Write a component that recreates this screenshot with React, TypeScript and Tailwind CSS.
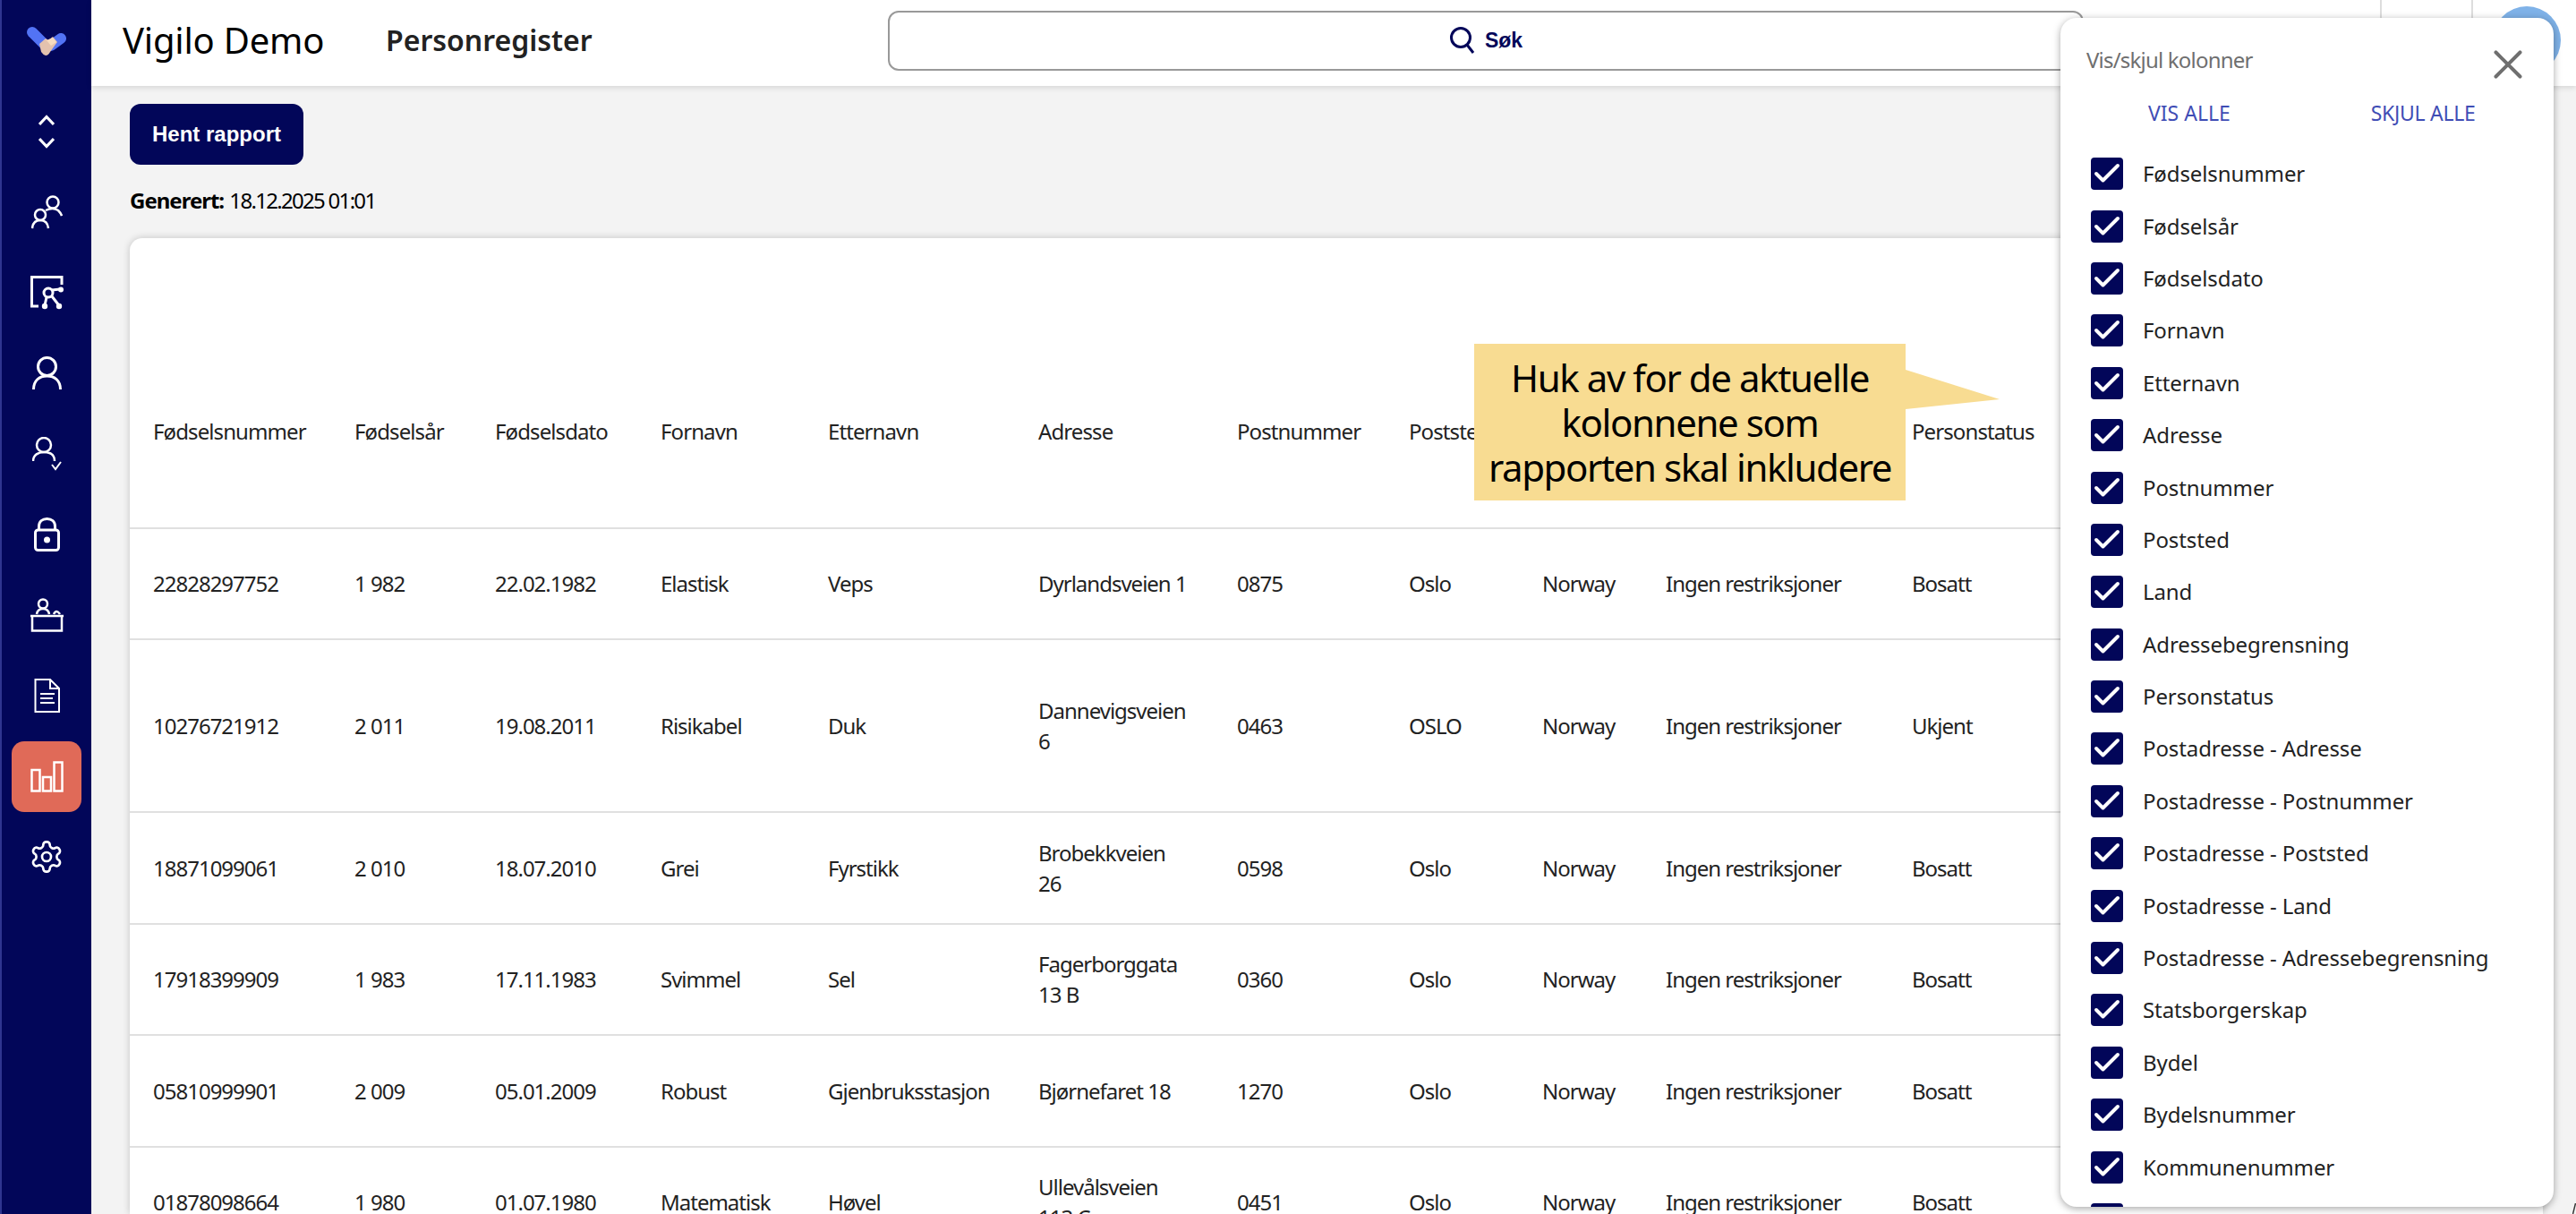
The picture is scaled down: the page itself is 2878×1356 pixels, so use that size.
import React from 'react';
import { Check, X } from 'lucide-react';

const columns = ['Fødselsnummer', 'Fødselsår', 'Fødselsdato', 'Fornavn', 'Etternavn', 'Adresse', 'Postnummer', 'Poststed', 'Land', 'Adressebegrensning', 'Personstatus'];

const rows = [
  { h: 'h-[124px]', cells: ['22828297752', '1 982', '22.02.1982', 'Elastisk', 'Veps', 'Dyrlandsveien 1', '0875', 'Oslo', 'Norway', 'Ingen restriksjoner', 'Bosatt'] },
  { h: 'h-[193px]', cells: ['10276721912', '2 011', '19.08.2011', 'Risikabel', 'Duk', 'Dannevigsveien\n6', '0463', 'OSLO', 'Norway', 'Ingen restriksjoner', 'Ukjent'] },
  { h: 'h-[125px]', cells: ['18871099061', '2 010', '18.07.2010', 'Grei', 'Fyrstikk', 'Brobekkveien\n26', '0598', 'Oslo', 'Norway', 'Ingen restriksjoner', 'Bosatt'] },
  { h: 'h-[124px]', cells: ['17918399909', '1 983', '17.11.1983', 'Svimmel', 'Sel', 'Fagerborggata\n13 B', '0360', 'Oslo', 'Norway', 'Ingen restriksjoner', 'Bosatt'] },
  { h: 'h-[125px]', cells: ['05810999901', '2 009', '05.01.2009', 'Robust', 'Gjenbruksstasjon', 'Bjørnefaret 18', '1270', 'Oslo', 'Norway', 'Ingen restriksjoner', 'Bosatt'] },
  { h: 'h-[124px]', cells: ['01878098664', '1 980', '01.07.1980', 'Matematisk', 'Høvel', 'Ullevålsveien\n113 C', '0451', 'Oslo', 'Norway', 'Ingen restriksjoner', 'Bosatt'] },
];

const widths = ['w-[251px]', 'w-[157px]', 'w-[185px]', 'w-[187px]', 'w-[235px]', 'w-[222px]', 'w-[192px]', 'w-[149px]', 'w-[138px]', 'w-[275px]', 'w-[160px]'];

const options = ['Fødselsnummer', 'Fødselsår', 'Fødselsdato', 'Fornavn', 'Etternavn', 'Adresse', 'Postnummer', 'Poststed', 'Land', 'Adressebegrensning', 'Personstatus', 'Postadresse - Adresse', 'Postadresse - Postnummer', 'Postadresse - Poststed', 'Postadresse - Land', 'Postadresse - Adressebegrensning', 'Statsborgerskap', 'Bydel', 'Bydelsnummer', 'Kommunenummer', 'Kommune'];

const Logo = () => (
  <svg width="44" height="32" viewBox="0 0 44 32">
    <path d="M6 6 L21 21" stroke="#5273f5" strokeWidth="12" strokeLinecap="round" />
    <path d="M38 13 L27 21" stroke="#5273f5" strokeWidth="12" strokeLinecap="round" />
    <path d="M14 19 L21 13 L24 15 L29 11 L34 17 L26 28 Q24 32 21 32 Q18 31 16 28 Z" fill="#e3c2ae" />
    <path d="M22 15 L29 12 L33 17 L27 21 Z" fill="#f6dcc0" />
  </svg>
);

const navIcons = [
  // opp/ned
  <svg key="a" width="18" height="38" viewBox="0 0 18 38" fill="none" stroke="white" strokeWidth="3.2"><path d="M1 11 L9 2.5 L17 11 M1 27 L9 35.5 L17 27" /></svg>,
  // brukere
  <svg key="b" width="35" height="38" viewBox="0 0 35 38" fill="none" stroke="white" strokeWidth="2.5"><circle cx="24" cy="8" r="6.5" /><path d="M16 17 Q24 13 30 17 Q33 20 34 23" /><circle cx="10" cy="22" r="6" /><path d="M1 37 Q2 28 10 28 Q18 28 19 37" /></svg>,
  // tavle
  <svg key="c" width="37" height="38" viewBox="0 0 37 38" fill="none" stroke="white" strokeWidth="3"><path d="M35 10 V1.5 H1.5 V34 H9" /><circle cx="20" cy="19" r="5" /><path d="M24 16 L33 15 M24 23 L31 32 M18 24 L16 33" /><circle cx="34" cy="15.5" r="3" fill="white" stroke="none" /><circle cx="32" cy="34" r="3.2" fill="white" stroke="none" /><circle cx="16" cy="34" r="3.2" fill="white" stroke="none" /></svg>,
  // person
  <svg key="d" width="33" height="38" viewBox="0 0 33 38" fill="none" stroke="white" strokeWidth="3"><circle cx="16.5" cy="11.5" r="10" /><path d="M1.5 37 C1.5 27 8 22 16.5 22 C25 22 31.5 27 31.5 37" /></svg>,
  // person med hake
  <svg key="e" width="33" height="38" viewBox="0 0 33 38" fill="none" stroke="white" strokeWidth="2.5"><circle cx="13" cy="9" r="8" /><path d="M1 27 C1 20 7 17 13 17 C20 17 25 20 25 27" /><path d="M22 31 L26 36 L32 28" strokeWidth="2" /></svg>,
  // lås
  <svg key="f" width="29" height="38" viewBox="0 0 29 38" fill="none" stroke="white" strokeWidth="3"><rect x="1.5" y="14" width="26" height="22.5" rx="3" /><path d="M5.5 14 V10 C5.5 4.5 9.5 1.5 14.5 1.5 C19.5 1.5 23.5 4.5 23.5 10 V14" /><circle cx="14.5" cy="25" r="3.5" fill="white" stroke="none" /></svg>,
  // skranke
  <svg key="g" width="37" height="38" viewBox="0 0 37 38" fill="none" stroke="white" strokeWidth="2.5"><circle cx="14" cy="6.5" r="5" /><path d="M7 18 Q8 12 14 12 Q20 12 21 18" /><path d="M26 18 Q29 12 33 18" /><path d="M0 20 H37 M2 20 V36.5 H35 V20" /></svg>,
  // dokument
  <svg key="h" width="29" height="38" viewBox="0 0 29 38" fill="none" stroke="white" strokeWidth="2"><path d="M1.5 1 H18 L28 11 V37 H1.5 Z M18 1 V11 H28" /><path d="M7 17 H23 M7 22 H21 M7 27 H23" /></svg>,
];

const Nav = () => (
  <nav className="flex w-[102px] shrink-0 flex-col items-center border-l-2 border-[#2f3590] bg-[#020659]">
    <div className="mt-[30px] flex h-[32px] items-center"><Logo /></div>
    <div className="mt-[40px] flex flex-col items-center">
      {navIcons.map((icon, i) => (
        <div key={i} className="flex h-[90px] items-center justify-center">{icon}</div>
      ))}
    </div>
    <div className="mt-[6px] flex h-[79px] w-[78px] items-center justify-center rounded-[14px] bg-[#e06a58]">
      <svg width="37" height="35" viewBox="0 0 37 35" fill="none" stroke="white" strokeWidth="2.5"><rect x="1.5" y="10" width="9" height="23.5" /><rect x="14" y="18" width="9" height="15.5" /><rect x="26.5" y="1.5" width="9" height="32" /></svg>
    </div>
    <div className="mt-[30px]">
      <svg width="40" height="40" viewBox="0 0 24 24" fill="none" stroke="white" strokeWidth="1.6" strokeLinecap="round" strokeLinejoin="round"><path d="M12.22 2h-.44a2 2 0 0 0-2 2v.18a2 2 0 0 1-1 1.73l-.43.25a2 2 0 0 1-2 0l-.15-.08a2 2 0 0 0-2.73.73l-.22.38a2 2 0 0 0 .73 2.73l.15.1a2 2 0 0 1 1 1.72v.51a2 2 0 0 1-1 1.74l-.15.09a2 2 0 0 0-.73 2.73l.22.38a2 2 0 0 0 2.73.73l.15-.08a2 2 0 0 1 2 0l.43.25a2 2 0 0 1 1 1.73V20a2 2 0 0 0 2 2h.44a2 2 0 0 0 2-2v-.18a2 2 0 0 1 1-1.73l.43-.25a2 2 0 0 1 2 0l.15.08a2 2 0 0 0 2.73-.73l.22-.39a2 2 0 0 0-.73-2.73l-.15-.08a2 2 0 0 1-1-1.74v-.5a2 2 0 0 1 1-1.74l.15-.09a2 2 0 0 0 .73-2.73l-.22-.38a2 2 0 0 0-2.73-.73l-.15.08a2 2 0 0 1-2 0l-.43-.25a2 2 0 0 1-1-1.73V4a2 2 0 0 0-2-2z" /><circle cx="12" cy="12" r="3" /></svg>
    </div>
  </nav>
);

const Header = () => (
  <header className="relative z-10 flex h-[96px] shrink-0 items-center bg-white pb-[6px] pl-[35px] shadow-[0_2px_6px_rgba(0,0,0,0.12)]">
    <div className="w-[294px] text-[40px] tracking-[-0.2px] text-black">Vigilo Demo</div>
    <div className="w-[561px] text-[32px] font-semibold text-[#222]">Personregister</div>
    <div className="flex h-[67px] w-[1336px] items-center justify-center gap-[10px] rounded-[12px] border-2 border-[#999] font-['Liberation_Sans'] text-[23px] font-bold text-[#020659]">
      <svg width="30" height="32" viewBox="0 0 30 32" fill="none" stroke="#020659" strokeWidth="3"><circle cx="13" cy="13" r="10.5" /><path d="M20 21 L27 30" /></svg>
      Søk
    </div>
    <div className="-mt-[6px] ml-[331px] h-[96px] w-[2px] bg-[#ddd]" />
    <div className="-mt-[6px] ml-[100px] h-[96px] w-[2px] bg-[#ddd]" />
    <div className="ml-[22px] h-[76px] w-[76px] rounded-full bg-[#7fb2e8]" />
  </header>
);

const Table = () => (
  <div className="mr-[37px] mt-[26px] min-h-0 flex-1 overflow-hidden rounded-t-[14px] bg-white shadow-[0_0_8px_rgba(0,0,0,0.2)]">
    <table className="w-full table-fixed border-collapse text-[24px] leading-[34px] tracking-[-1px] text-[#222]">
      <colgroup>
        {widths.map((w) => <col key={w} className={w} />)}
        <col />
      </colgroup>
      <thead>
        <tr className="h-[324px] border-b-2 border-[#e0e0e0]">
          {columns.map((c, i) => (
            <th key={c} className={`pt-[108px] text-left font-[450] tracking-[-0.9px] ${i === 0 ? 'pl-[26px]' : ''}`}>{c}</th>
          ))}
          <th />
        </tr>
      </thead>
      <tbody>
        {rows.map((r) => (
          <tr key={r.cells[0]} className={`border-b-2 border-[#e0e0e0] ${r.h}`}>
            {r.cells.map((cell, i) => (
              <td key={i} className={`whitespace-pre-line ${i === 0 ? 'pl-[26px]' : ''}`}>{cell}</td>
            ))}
            <td />
          </tr>
        ))}
      </tbody>
    </table>
  </div>
);

const Callout = () => (
  <div className="absolute left-[1647px] top-[384px] z-20 flex h-[175px] w-[482px] items-center justify-center whitespace-nowrap bg-[#f8dc92] text-center text-[42px] leading-[50px] tracking-[-1.4px] text-black">
    <div>Huk av for de aktuelle<br />kolonnene som<br />rapporten skal inkludere</div>
    <svg className="absolute left-full top-[29px]" width="105" height="44" viewBox="0 0 105 44"><polygon points="0,0 105,33 0,44" fill="#f8dc92" /></svg>
  </div>
);

const ColumnPanel = () => (
  <aside className="absolute left-[2302px] top-[20px] z-30 flex h-[1328px] w-[551px] flex-col overflow-hidden rounded-[18px] bg-white shadow-[0_2px_8px_rgba(0,0,0,0.35)]">
    <div className="flex h-[82px] shrink-0 items-center justify-between pl-[29px] pr-[24px]">
      <span className="mt-[12px] text-[24px] tracking-[-0.8px] text-[#6f6f6f]">Vis/skjul kolonner</span>
      <X size={54} strokeWidth={1.8} color="#6f6f6f" className="mt-[22px]" />
    </div>
    <div className="flex h-[48px] shrink-0 items-center text-[23px] text-[#3f4db5]">
      <span className="ml-[98px]">VIS ALLE</span>
      <span className="ml-[157px] tracking-[-0.3px]">SKJUL ALLE</span>
    </div>
    <div className="mt-[15px] flex shrink-0 flex-col pl-[34px]">
      {options.map((o) => (
        <div key={o} className="flex h-[58.4px] shrink-0 items-center gap-[22px]">
          <div className="flex h-[36px] w-[36px] shrink-0 items-center justify-center rounded-[4px] bg-[#020659]">
            <Check size={36} strokeWidth={2.6} color="white" className="shrink-0" />
          </div>
          <span className="text-[24px] tracking-[-0.1px] text-[#222]">{o}</span>
        </div>
      ))}
    </div>
  </aside>
);

export default function App() {
  return (
    <div className="relative flex h-[1356px] w-[2878px] overflow-hidden bg-[#f3f3f3] font-['Noto_Sans',sans-serif]">
      <Nav />
      <main className="flex min-w-0 flex-1 flex-col">
        <Header />
        <div className="flex min-h-0 flex-1 flex-col pl-[43px] pt-[20px]">
          <button className="h-[68px] w-[194px] rounded-[12px] bg-[#020659] font-['Liberation_Sans'] text-[24px] font-bold text-white">Hent rapport</button>
          <p className="mt-[23px] text-[24px] leading-[33px] text-black"><b className="tracking-[-1px]">Generert:</b> <span className="tracking-[-1.7px]">18.12.2025 01:01</span></p>
          <Table />
        </div>
      </main>
      <Callout />
      <ColumnPanel />
      <svg className="absolute bottom-0 right-0" width="4" height="12" viewBox="0 0 4 12"><path d="M3.5 0 L0.5 12" stroke="#333" strokeWidth="1.5" /></svg>
    </div>
  );
}
